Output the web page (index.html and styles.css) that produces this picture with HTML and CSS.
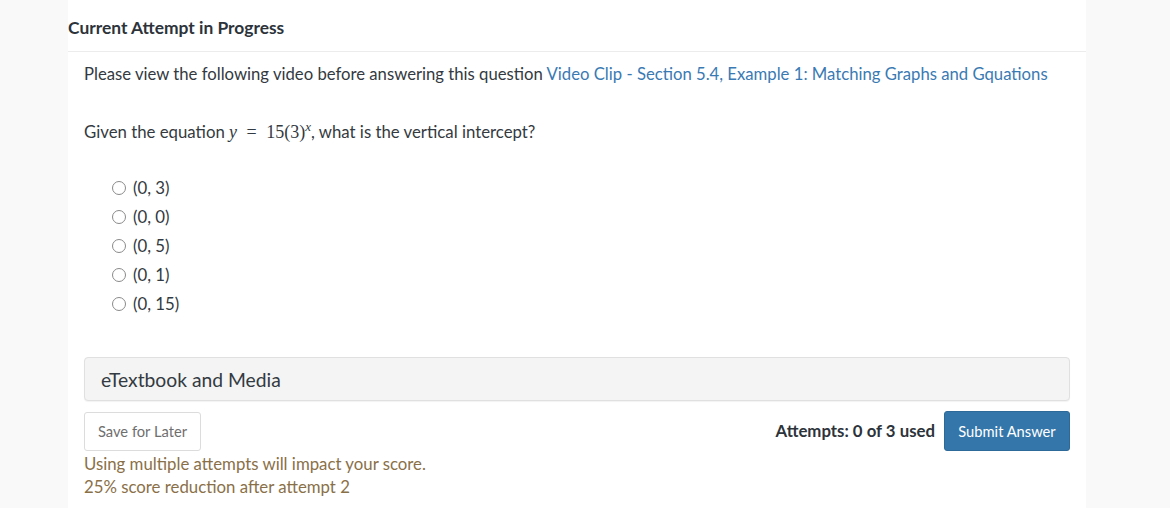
FILE: index.html
```html
<!DOCTYPE html>
<html>
<head>
<meta charset="utf-8">
<link rel="stylesheet" href="styles.css">
</head>
<body>
<div class="card">
  <div class="card-header">Current Attempt in Progress</div>
  <div class="card-body">
    <p class="intro">Please view the following video before answering this question <a class="link" href="#">Video Clip - Section 5.4, Example 1: Matching Graphs and Gquations</a></p>
    <p class="question">Given the equation <span class="math"><i>y</i> <span class="eq">=</span> 15(3)<sup><i>x</i></sup></span>, what is the vertical intercept?</p>
    <ul class="options">
      <li class="option"><span class="radio"></span>(0, 3)</li>
      <li class="option"><span class="radio"></span>(0, 0)</li>
      <li class="option"><span class="radio"></span>(0, 5)</li>
      <li class="option"><span class="radio"></span>(0, 1)</li>
      <li class="option"><span class="radio"></span>(0, 15)</li>
    </ul>
    <div class="media-panel">eTextbook and Media</div>
    <div class="actions">
      <button class="btn btn-default">Save for Later</button>
      <div class="actions-right">
        <span class="attempts">Attempts: 0 of 3 used</span>
        <button class="btn btn-primary">Submit Answer</button>
      </div>
    </div>
    <div class="warning">
      <div>Using multiple attempts will impact your score.</div>
      <div>25% score reduction after attempt 2</div>
    </div>
  </div>
</div>
</body>
</html>
```

FILE: styles.css
```css
html, body {
  margin: 0;
  padding: 0;
  background: #f9f9f9;
  font-family: Lato, "Liberation Sans", sans-serif;
  color: #333a41;
}

.card {
  margin-left: 68px;
  width: 1018px;
  min-height: 508px;
  background: #ffffff;
}

.card-header {
  font-size: 17.4px;
  font-weight: 700;
  line-height: 20px;
  padding: 18px 0 13px 0;
  border-bottom: 1px solid #ececec;
  color: #2d333a;
}

.card-body {
  padding: 0 16px;
}

.intro {
  margin: 0;
  padding-top: 11px;
  font-size: 16.7px;
  line-height: 22px;
}

.link {
  color: #3a7ab3;
  text-decoration: none;
}

.question {
  margin: 36px 0 0 0;
  font-size: 16.8px;
  line-height: 22px;
}

.math {
  font-family: "Liberation Serif", "DejaVu Serif", serif;
  font-size: 18px;
}

.math .eq {
  margin: 0 5px;
}

.math sup {
  font-size: 13px;
  line-height: 0;
  vertical-align: 7px;
}

.options {
  list-style: none;
  margin: 30px 0 0 0;
  padding: 0 0 0 28px;
}

.option {
  display: flex;
  align-items: center;
  height: 29px;
  font-size: 16.8px;
}

.radio {
  box-sizing: border-box;
  width: 14px;
  height: 14px;
  border: 1px solid #8a8a8a;
  border-radius: 50%;
  margin-right: 7px;
}

.media-panel {
  margin-top: 39px;
  height: 44px;
  box-sizing: border-box;
  background: #f4f4f4;
  border: 1px solid #e0e0e0;
  border-radius: 4px;
  box-shadow: 0 1px 1px rgba(0,0,0,0.05);
  padding-left: 16px;
  display: flex;
  align-items: center;
  font-size: 19.3px;
  color: #333a41;
}

.actions {
  margin-top: 10px;
  display: flex;
  justify-content: space-between;
  align-items: center;
}

.actions-right {
  display: flex;
  align-items: center;
  gap: 9px;
}

.btn {
  font-family: Lato, "Liberation Sans", sans-serif;
  font-size: 14.7px;
  border-radius: 3px;
  cursor: pointer;
  box-sizing: border-box;
}

.btn-default {
  width: 117px;
  height: 39px;
  background: #ffffff;
  border: 1px solid #dcdcdc;
  color: #6f6f6f;
}

.btn-primary {
  width: 126px;
  height: 40px;
  background: #3476a9;
  border: 1px solid #2e6a99;
  color: #ffffff;
}

.attempts {
  font-size: 16.8px;
  font-weight: 700;
  color: #2d333a;
  position: relative;
  top: -1px;
}

.warning {
  margin-top: 1px;
  font-size: 16.8px;
  line-height: 23px;
  color: #8a7048;
}
```
